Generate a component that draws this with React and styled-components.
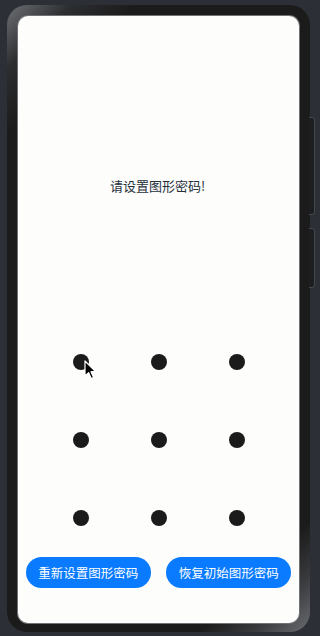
import styled, { createGlobalStyle } from "styled-components";

const GlobalStyle = createGlobalStyle`
    html, body {
        margin: 0;
        padding: 0;
        background-color: #2c3036;
    }
    * {
        box-sizing: border-box;
    }
`

const Stage = styled.div`
    width: 320px;
    height: 636px;
    padding: 5px 0 0 7px;
    background-color: #2c3036;
    font-family: "Noto Sans CJK SC", "Noto Sans", sans-serif;
`

const Phone = styled.div`
    position: relative;
    width: 303px;
    height: 627px;
    padding: 11px 11px 9px 11px;
    border-radius: 20px;
    background: linear-gradient(135deg, #6e7074 0%, #2c2d2f 7%, #1b1b1b 14%, #1b1b1b 88%, #3a3b3e 94%, #6a6c70 100%);
`

const SideKey = styled.div`
    position: absolute;
    left: 302px;
    top: ${(p) => p.top}px;
    width: 6px;
    height: ${(p) => p.h}px;
    background-color: #1d1e20;
    border: 1px solid #44474c;
    border-left: none;
    border-radius: 0 3px 3px 0;
`

const Screen = styled.div`
    width: 281px;
    height: 607px;
    background-color: #fdfdfb;
    border-radius: 10px;
    box-shadow: 0 0 0 1px #6f7175;
    display: flex;
    flex-direction: column;
    overflow: hidden;
`

const Title = styled.div`
    padding-top: 160px;
    padding-right: 2px;
    height: 180px;
    line-height: 20px;
    font-size: 13px;
    color: #26303b;
    text-align: center;
`

const Pattern = styled.div`
    margin-top: 127px;
    display: grid;
    grid-template-columns: repeat(3, 78px);
    grid-template-rows: repeat(3, 78px);
    justify-content: center;
`

const Cell = styled.div`
    position: relative;
    display: flex;
    align-items: center;
    justify-content: center;
`

const Dot = styled.div`
    width: 16px;
    height: 16px;
    border-radius: 50%;
    background-color: #1b1b1b;
`

const Cursor = styled.svg`
    position: absolute;
    left: 42px;
    top: 37px;
`

const Actions = styled.div`
    margin-top: 0;
    display: flex;
    justify-content: space-around;
`

const Button = styled.button`
    width: 125px;
    height: 31px;
    border: none;
    border-radius: 16px;
    background-color: #0a7bff;
    color: #ffffff;
    font-family: "Noto Sans CJK SC", "Noto Sans", sans-serif;
    font-size: 12.5px;
    padding: 0;
`

const App = () => {
    const dots = [0, 1, 2, 3, 4, 5, 6, 7, 8]
    return (
        <Stage>
            <GlobalStyle />
            <Phone>
                <SideKey top={112} h={98} />
                <SideKey top={223} h={60} />
                <Screen>
                    <Title>请设置图形密码!</Title>
                    <Pattern>
                        {dots.map((d) => (
                            <Cell key={d}>
                                <Dot />
                                {d === 0 && (
                                    <Cursor width="13" height="20" viewBox="0 0 13 20">
                                        <path d="M1 1 L1 16 L4.6 12.6 L7.2 18.6 L9.6 17.6 L7 11.7 L11.8 11.7 Z" fill="#000" stroke="#fff" strokeWidth="1.2" strokeLinejoin="round" />
                                    </Cursor>
                                )}
                            </Cell>
                        ))}
                    </Pattern>
                    <Actions>
                        <Button>重新设置图形密码</Button>
                        <Button>恢复初始图形密码</Button>
                    </Actions>
                </Screen>
            </Phone>
        </Stage>
    )
}

export default App
